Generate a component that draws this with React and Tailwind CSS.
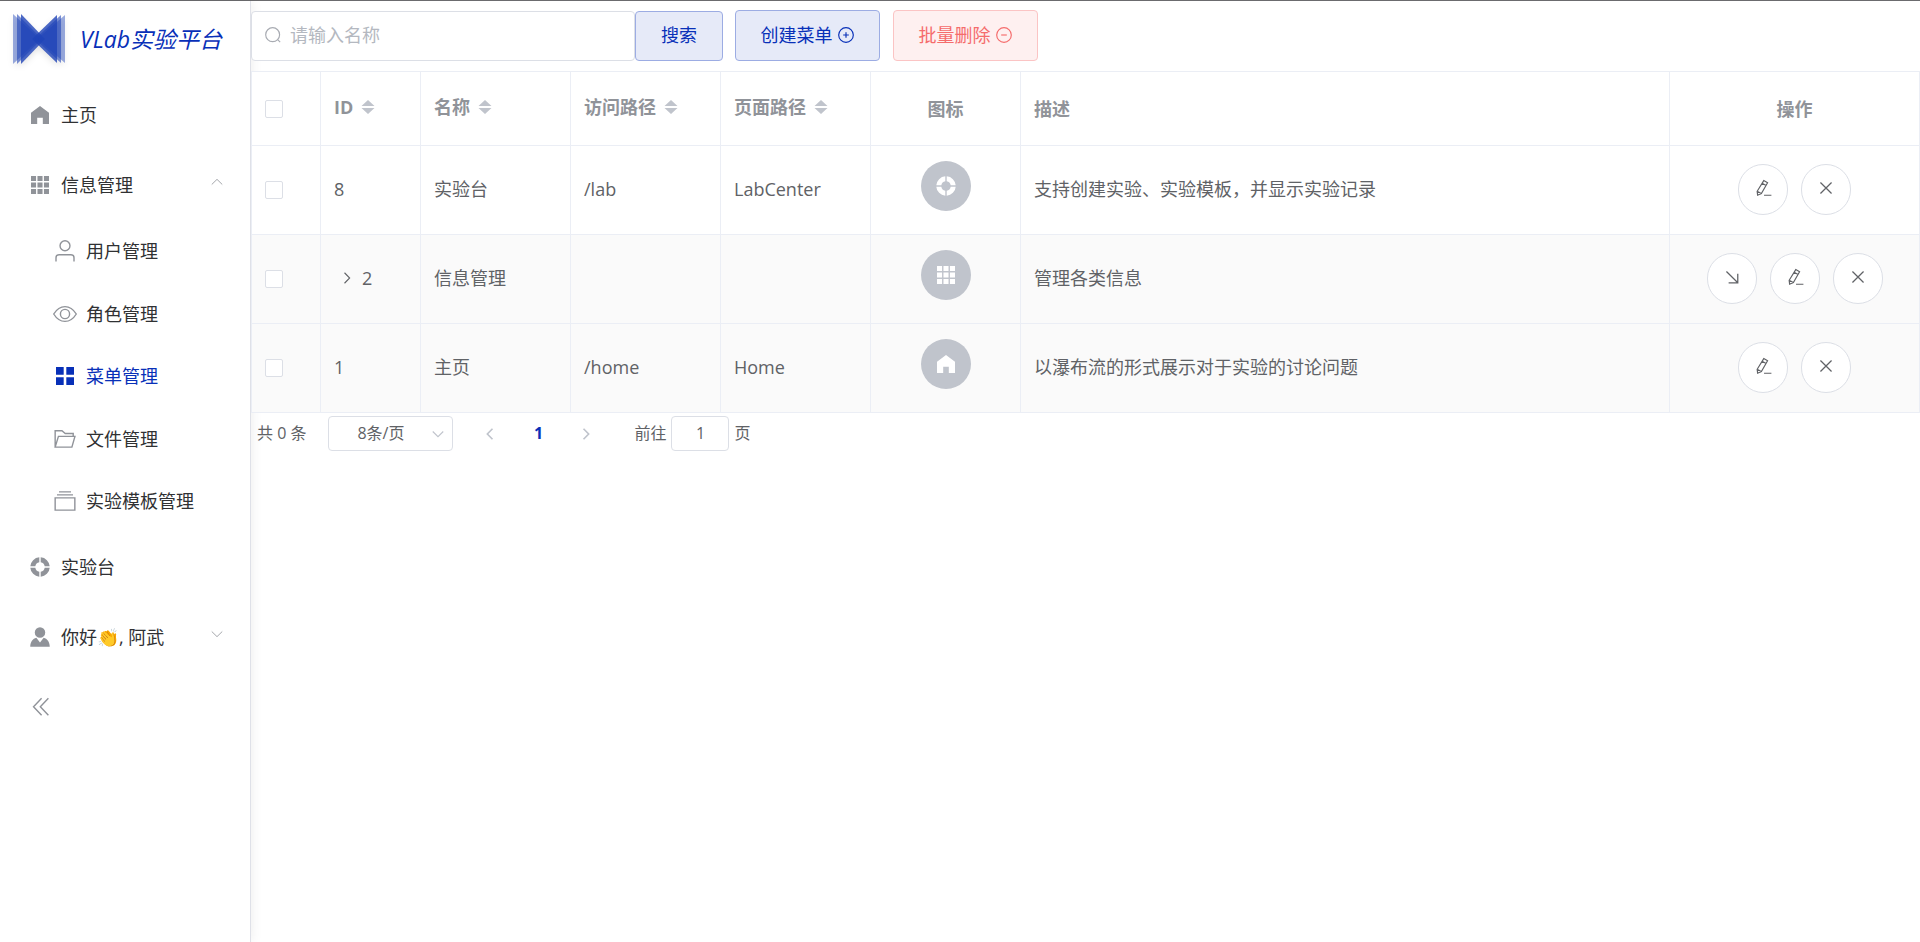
import { useState } from 'react';

// Small icon wrapper, all drawings share a 1024 grid
function Icon({ children, className = 'size-6' }) {
  return (
    <svg viewBox="0 0 1024 1024" fill="currentColor" aria-hidden="true" className={`shrink-0 ${className}`}>
      {children}
    </svg>
  );
}

// Outline version of the icon wrapper
function LineIcon({ children, className = 'size-6', width = 60 }) {
  return (
    <svg
      viewBox="0 0 1024 1024"
      fill="none"
      stroke="currentColor"
      strokeWidth={width}
      aria-hidden="true"
      className={`shrink-0 ${className}`}
    >
      {children}
    </svg>
  );
}

const HomeIcon = ({ className }) => (
  <Icon className={className}>
    <path d="M512 132 128 420v472h264V632h240v260h264V420z" />
  </Icon>
);

const GridIcon = ({ className }) => (
  <Icon className={className}>
    <path d="M128 128h216v216H128zM404 128h216v216H404zM680 128h216v216H680zM128 404h216v216H128zM404 404h216v216H404zM680 404h216v216H680zM128 680h216v216H128zM404 680h216v216H404zM680 680h216v216H680z" />
  </Icon>
);

const HelpIcon = ({ className }) => (
  <Icon className={className}>
    <path d="M482 98v214a206 206 0 0 0-170 170H98A416 416 0 0 1 482 98zM542 98v214a206 206 0 0 1 170 170h214A416 416 0 0 0 542 98zM482 926V712a206 206 0 0 1-170-170H98a416 416 0 0 0 384 384zM542 926V712a206 206 0 0 0 170-170h214a416 416 0 0 1-384 384z" />
  </Icon>
);

const UserFilledIcon = ({ className }) => (
  <Icon className={className}>
    <path d="M288 320a224 224 0 1 0 448 0 224 224 0 1 0-448 0zM96 928c0-190 110-350 260-380l156 200 156-200c150 30 260 190 260 380z" />
  </Icon>
);

const MenuIcon = ({ className }) => (
  <Icon className={className}>
    <path d="M128 128h328v328H128zM568 128h328v328H568zM128 568h328v328H128zM568 568h328v328H568z" />
  </Icon>
);

const UserIcon = ({ className }) => (
  <LineIcon className={className}>
    <circle cx="512" cy="288" r="212" />
    <path d="M128 960V800a128 128 0 0 1 128-128h512a128 128 0 0 1 128 128v160" />
  </LineIcon>
);

const ViewIcon = ({ className }) => (
  <LineIcon className={className}>
    <path d="M30 512c130-210 290-316 482-316s352 106 482 316c-130 210-290 316-482 316S160 722 30 512z" />
    <circle cx="512" cy="512" r="196" />
  </LineIcon>
);

const FolderIcon = ({ className }) => (
  <LineIcon className={className}>
    <path d="M92 860V160h290l140 120h340v120M92 860l140-460h704l-130 460z" />
  </LineIcon>
);

const FilesIcon = ({ className }) => (
  <LineIcon className={className}>
    <path d="M92 380h840v520H92zM170 250h684M256 124h512" />
  </LineIcon>
);

const PlusCircleIcon = ({ className }) => (
  <LineIcon className={className} width={66}>
    <circle cx="512" cy="512" r="416" />
    <path d="M352 512h320M512 352v320" />
  </LineIcon>
);

const MinusCircleIcon = ({ className }) => (
  <LineIcon className={className} width={66}>
    <circle cx="512" cy="512" r="416" />
    <path d="M352 512h320" />
  </LineIcon>
);

const SearchIcon = ({ className }) => (
  <LineIcon className={className} width={66}>
    <circle cx="492" cy="492" r="396" />
    <path d="m776 776 144 144" />
  </LineIcon>
);

const EditIcon = ({ className }) => (
  <LineIcon className={className} width={66}>
    <path d="m556 92 216 122-352 608-214 100-26-222zM468 244l216 122M184 700l226 128M570 924h420" />
  </LineIcon>
);

const CloseIcon = ({ className }) => (
  <LineIcon className={className} width={72}>
    <path d="m196 196 632 632M828 196 196 828" />
  </LineIcon>
);

const BottomRightIcon = ({ className }) => (
  <LineIcon className={className} width={72}>
    <path d="m196 196 632 632M320 840h520V320" />
  </LineIcon>
);

// Chevron pointing down, other directions are rotations of it
const ChevronIcon = ({ className, width }) => (
  <LineIcon className={className} width={width}>
    <path d="m128 330 384 376 384-376" />
  </LineIcon>
);

const CollapseIcon = ({ className }) => (
  <LineIcon className={className}>
    <path d="M580 140 236 500l344 360M870 140 526 500l344 360" />
  </LineIcon>
);

function Logo() {
  return (
    <svg viewBox="0 0 60 60" aria-hidden="true" className="size-15 shrink-0 drop-shadow-md">
      <g fill="#1f44b8">
        <path fillOpacity="0.45" d="M5 5 32 30 5 55z" />
        <path fillOpacity="0.6" d="M9 5 34 30 9 55z" />
        <path fillOpacity="0.8" d="M13 5 37 30 13 55z" />
        <path fillOpacity="0.45" d="M57 6 29 30l28 24z" />
        <path fillOpacity="0.6" d="M53 6 27 30l26 24z" />
        <path fillOpacity="0.8" d="M49 6 24 30l25 24z" />
      </g>
    </svg>
  );
}

const subMenu = [
  { label: '用户管理', icon: UserIcon },
  { label: '角色管理', icon: ViewIcon },
  { label: '菜单管理', icon: MenuIcon, active: true },
  { label: '文件管理', icon: FolderIcon },
  { label: '实验模板管理', icon: FilesIcon },
];

const rows = [
  { id: 8, name: '实验台', path: '/lab', page: 'LabCenter', icon: HelpIcon, desc: '支持创建实验、实验模板，并显示实验记录' },
  { id: 2, name: '信息管理', path: '', page: '', icon: GridIcon, desc: '管理各类信息', expandable: true },
  { id: 1, name: '主页', path: '/home', page: 'Home', icon: HomeIcon, desc: '以瀑布流的形式展示对于实验的讨论问题' },
];

const itemClass = 'flex h-[70px] w-full items-center gap-[9px] pr-[26px] pl-7 text-left';

function Sidebar() {
  return (
    <aside className="w-[251px] shrink-0 border-r border-[#dfe1e8] bg-white text-[#303133] shadow-[0_0_12px_rgba(0,0,0,0.08)]">
      <a href="#home" className="flex h-[79px] items-center gap-3 px-2 pb-1 text-[23px] text-[#0830b8] italic">
        <Logo />
        <span>VLab实验平台</span>
      </a>
      <nav>
        <a href="#home" className={itemClass}>
          <HomeIcon className="size-6 text-[#909399]" />
          主页
        </a>
        <button className={itemClass}>
          <GridIcon className="size-6 text-[#909399]" />
          <span className="flex-1">信息管理</span>
          <ChevronIcon className="mb-1.5 size-[14px] rotate-180 text-[#909399]" />
        </button>
        <ul className="flex h-78 flex-col justify-between">
          {subMenu.map(({ label, icon: ItemIcon, active }) => (
            <li key={label}>
              <a
                href="#menu"
                className={`flex h-[62px] items-center gap-[9px] pl-[53px] ${active ? 'text-[#0830b8]' : ''}`}
              >
                <ItemIcon className={active ? 'size-6' : 'size-6 text-[#909399]'} />
                {label}
              </a>
            </li>
          ))}
        </ul>
        <a href="#lab" className={itemClass}>
          <HelpIcon className="size-6 text-[#909399]" />
          实验台
        </a>
        <button className={itemClass}>
          <UserFilledIcon className="size-6 text-[#909399]" />
          <span className="flex-1">你好👏, 阿武</span>
          <ChevronIcon className="mb-1.5 size-[14px] text-[#909399]" />
        </button>
        <button aria-label="收起" className={itemClass}>
          <CollapseIcon className="size-6 text-[#909399]" />
        </button>
      </nav>
    </aside>
  );
}

function Toolbar() {
  const [name, setName] = useState('');

  return (
    <div className="flex h-[70px] items-end pb-[10px]">
      <label className="flex h-[50px] w-96 items-center gap-2 rounded border border-[#dcdfe6] bg-white px-3 pb-0.5 text-[#a8abb2]">
        <SearchIcon className="size-[18px]" />
        <input
          aria-label="名称"
          placeholder="请输入名称"
          value={name}
          onChange={(e) => setName(e.target.value)}
          className="min-w-0 flex-1 text-[#606266] outline-none placeholder:text-[#b4b8c0]"
        />
      </label>
      <button className="h-[50px] w-[88px] rounded border border-[#9cace3] bg-[#e6eaf8] pb-0.5 text-[#0830b8]">
        搜索
      </button>
      <button className="ml-3 flex h-[51px] w-[145px] items-center justify-center gap-1 rounded border border-[#9cace3] bg-[#e6eaf8] pb-0.5 text-[#0830b8]">
        创建菜单
        <PlusCircleIcon className="size-[18px]" />
      </button>
      <button className="ml-[13px] flex h-[51px] w-[145px] items-center justify-center gap-1 rounded border border-[#fbc4c4] bg-[#fef0f0] pb-0.5 text-[#f56c6c]">
        批量删除
        <MinusCircleIcon className="size-[18px]" />
      </button>
    </div>
  );
}

function Checkbox({ label }) {
  return (
    <input
      type="checkbox"
      aria-label={label}
      className="block size-[18px] appearance-none rounded-xs border border-[#dcdfe6] bg-white checked:bg-[#0830b8]"
    />
  );
}

// Header label with the two sort arrows behind it
function SortHeader({ children }) {
  return (
    <button className="flex items-center gap-2 pb-1">
      {children}
      <svg viewBox="0 0 14 14" fill="#c0c4cc" aria-hidden="true" className="size-[14px]">
        <path d="M7 0l6.500 6h-13zM7 14l6.500-6h-13z" />
      </svg>
    </button>
  );
}

function RoundButton({ label, children }) {
  return (
    <button
      aria-label={label}
      className="flex h-[51px] w-[50px] items-center justify-center rounded-full border border-[#dcdfe6] bg-white pb-0.5 text-[#606266]"
    >
      {children}
    </button>
  );
}

function MenuTable() {
  const headCell = 'border-r border-b border-[#ebeef5] px-[13px]';
  const cell = `${headCell} pb-0.5`;

  return (
    <table className="w-full table-fixed border-separate border-spacing-0 border-t border-l border-[#ebeef5] bg-white text-left text-[#606266]">
      <colgroup>
        <col className="w-[69px]" />
        <col className="w-[100px]" />
        <col className="w-[150px]" />
        <col className="w-[150px]" />
        <col className="w-[150px]" />
        <col className="w-[150px]" />
        <col />
        <col className="w-[250px]" />
      </colgroup>
      <thead className="text-[#909399]">
        <tr className="h-[74px]">
          <th className={headCell}>
            <Checkbox label="全选" />
          </th>
          <th className={headCell}><SortHeader>ID</SortHeader></th>
          <th className={headCell}><SortHeader>名称</SortHeader></th>
          <th className={headCell}><SortHeader>访问路径</SortHeader></th>
          <th className={headCell}><SortHeader>页面路径</SortHeader></th>
          <th className={`${headCell} text-center`}>图标</th>
          <th className={headCell}>描述</th>
          <th className={`${headCell} text-center`}>操作</th>
        </tr>
      </thead>
      <tbody>
        {rows.map(({ id, name, path, page, icon: RowIcon, desc, expandable }, i) => (
          <tr key={id} className={`h-[89px] ${i > 0 ? 'bg-[#fafafa]' : ''}`}>
            <td className={headCell}>
              <Checkbox label={name} />
            </td>
            <td className={cell}>
              {expandable ? (
                <span className="flex items-center gap-2 pl-1.5">
                  <button aria-label="展开">
                    <ChevronIcon className="size-[14px] -rotate-90" width={80} />
                  </button>
                  {id}
                </span>
              ) : (
                id
              )}
            </td>
            <td className={cell}>{name}</td>
            <td className={cell}>{path}</td>
            <td className={cell}>{page}</td>
            <td className={cell}>
              <span className="mx-auto mb-1.5 flex size-[50px] items-center justify-center rounded-full bg-[#c0c4cc] text-white">
                <RowIcon className="size-6" />
              </span>
            </td>
            <td className={cell}>{desc}</td>
            <td className={cell}>
              <div className="flex justify-center gap-[13px]">
                {expandable && (
                  <RoundButton label="新增子菜单">
                    <BottomRightIcon className="size-[18px]" />
                  </RoundButton>
                )}
                <RoundButton label="编辑">
                  <EditIcon className="size-[18px]" />
                </RoundButton>
                <RoundButton label="删除">
                  <CloseIcon className="size-[18px]" />
                </RoundButton>
              </div>
            </td>
          </tr>
        ))}
      </tbody>
    </table>
  );
}

function Pagination() {
  return (
    <div className="flex items-center px-1.5 py-[3px] text-base text-[#606266]">
      <span className="pb-0.5">共 0 条</span>
      <label className="relative ml-[22px] flex items-center">
        <select
          aria-label="每页条数"
          className="h-[35px] w-[125px] appearance-none rounded border border-[#dcdfe6] bg-white pr-5 pb-0.5 text-center outline-none"
        >
          <option>8条/页</option>
        </select>
        <ChevronIcon className="absolute right-2 size-[14px] text-[#c0c4cc]" width={80} />
      </label>
      <button aria-label="上一页" className="ml-[30px] text-[#c0c4cc]">
        <ChevronIcon className="size-[14px] rotate-90" width={120} />
      </button>
      <button className="mx-[31px] w-5 pb-0.5 font-bold text-[#0830b8]">1</button>
      <button aria-label="下一页" className="text-[#c0c4cc]">
        <ChevronIcon className="size-[14px] -rotate-90" width={120} />
      </button>
      <label className="ml-[41px] flex items-center gap-[5px]">
        <span className="pb-0.5">前往</span>
        <input
          defaultValue="1"
          className="h-[35px] w-[58px] rounded border border-[#dcdfe6] bg-white pb-0.5 text-center outline-none"
        />
        <span className="pb-0.5">页</span>
      </label>
    </div>
  );
}

function App() {
  return (
    <div className="flex min-h-screen border-t border-[#6b6b6e] bg-white font-['Open_Sans','Noto_Sans_CJK_SC',sans-serif] text-[18px] leading-6">
      <Sidebar />
      <main className="min-w-0 flex-1">
        <Toolbar />
        <MenuTable />
        <Pagination />
      </main>
    </div>
  );
}

export default App;
